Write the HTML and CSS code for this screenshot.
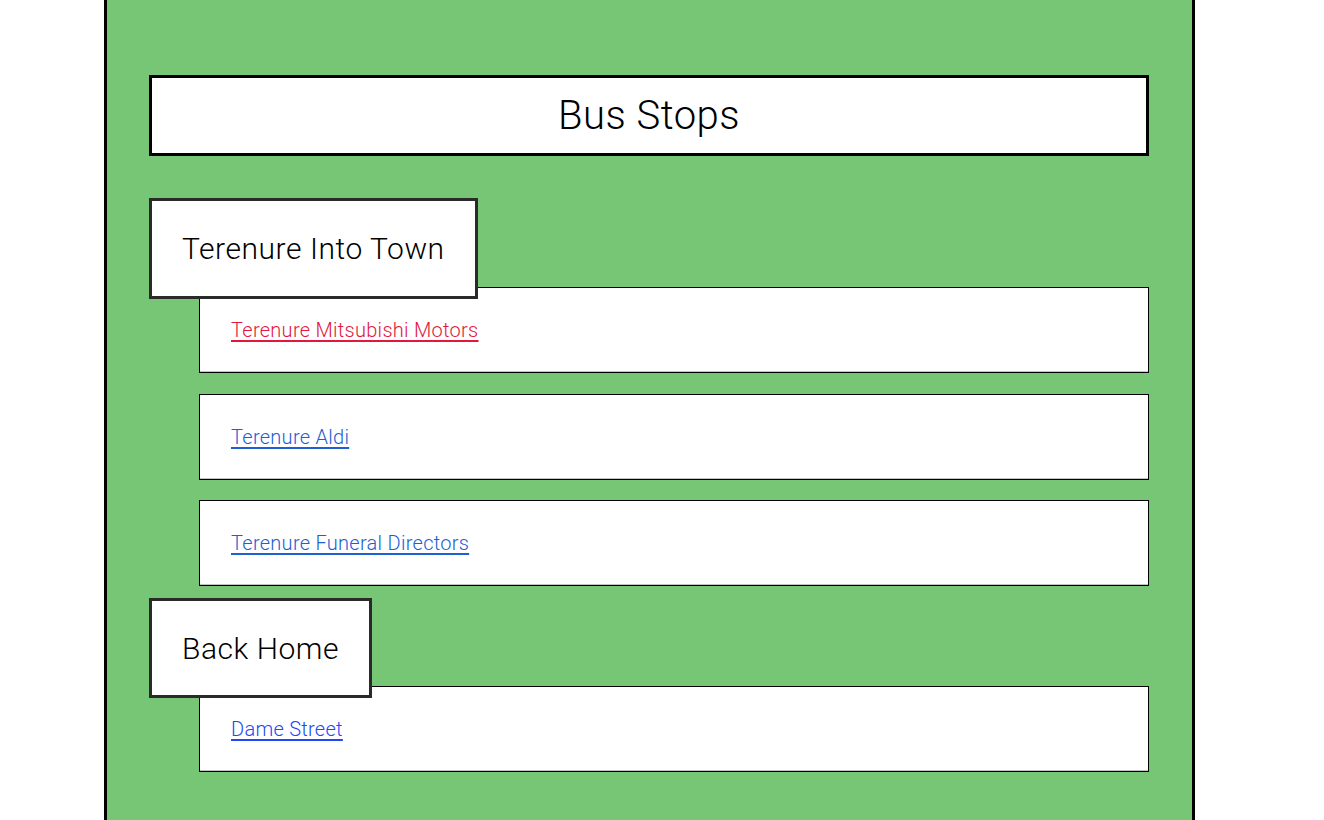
FILE: index.html
```html
<!DOCTYPE html>
<html lang="en">
<head>
<meta charset="utf-8">
<title>Bus Stops</title>
<link rel="stylesheet" href="styles.css">
</head>
<body>
<main class="page">
  <h1 class="title">Bus Stops</h1>
  <section class="group">
    <h2 class="group-head">Terenure Into Town</h2>
    <ul class="stops">
      <li class="stop"><a class="link link-active" href="#">Terenure Mitsubishi Motors</a></li>
      <li class="stop"><a class="link link-visited" href="#">Terenure Aldi</a></li>
      <li class="stop"><a class="link link-visited" href="#">Terenure Funeral Directors</a></li>
    </ul>
  </section>
  <section class="group">
    <h2 class="group-head">Back Home</h2>
    <ul class="stops">
      <li class="stop"><a class="link link-new" href="#">Dame Street</a></li>
    </ul>
  </section>
</main>
</body>
</html>
```

FILE: styles.css
```css
html, body {
  margin: 0;
  padding: 0;
  background: #ffffff;
}

body {
  font-family: Roboto, "Liberation Sans", sans-serif;
  font-weight: 300;
  color: #000;
}

.page {
  box-sizing: border-box;
  margin-left: 104px;
  width: 1091px;
  min-height: 820px;
  background: #77c675;
  border-left: 3px solid #000;
  border-right: 3px solid #000;
  padding: 75px 43px 40px 42px;
}

.title {
  box-sizing: border-box;
  width: 1000px;
  height: 81px;
  margin: 0;
  border: 3px solid #000;
  background: #fff;
  font-size: 40px;
  font-weight: 300;
  letter-spacing: 0.5px;
  line-height: 75px;
  text-align: center;
}

.group {
  margin-top: 42px;
}

.group + .group {
  margin-top: 12px;
}

.group-head {
  position: relative;
  z-index: 1;
  box-sizing: border-box;
  width: fit-content;
  height: 101px;
  margin: 0 0 -12px 0;
  padding: 0 30px 0 30px;
  border: 3px solid #2a2a2a;
  background: #fff;
  font-size: 30px;
  font-weight: 300;
  letter-spacing: 0.55px;
  line-height: 96px;
  white-space: nowrap;
}

.group + .group .group-head {
  height: 100px;
  line-height: 95px;
}

.stops {
  list-style: none;
  margin: 0;
  padding: 0 0 0 50px;
  display: flex;
  flex-direction: column;
  gap: 20.5px;
}

.stop {
  box-sizing: border-box;
  width: 950px;
  height: 86px;
  border: 1px solid #000;
  background: #fff;
  box-shadow: inset 0 -1px 0 #c4c4c4;
  display: flex;
  align-items: center;
  padding-left: 31px;
}

.link {
  font-size: 20px;
  font-weight: 300;
  letter-spacing: 0.28px;
  text-decoration: underline;
  text-underline-offset: 3px;
}

.link-active {
  color: #e2173d;
}

.link-visited {
  color: #1c60d2;
}

.link-new {
  color: #2347f2;
}
```
